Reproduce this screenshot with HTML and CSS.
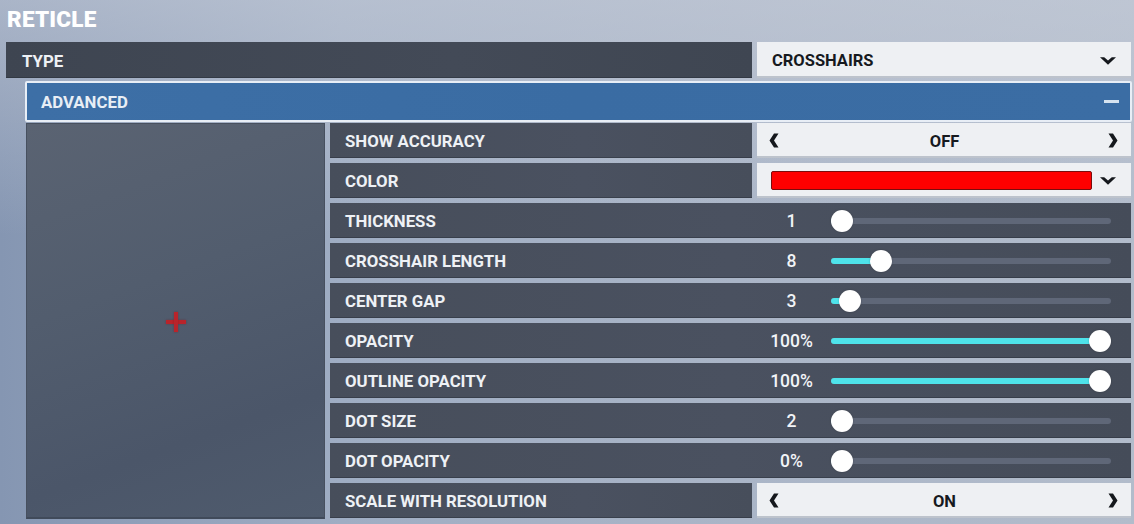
FILE: index.html
```html
<!DOCTYPE html>
<html lang="en">
<head>
<meta charset="utf-8">
<title>Reticle</title>
<link rel="stylesheet" href="styles.css">
</head>
<body>
<div class="page">
  <h1 class="title">RETICLE</h1>

  <div class="row type-row">
    <div class="label">TYPE</div>
    <div class="select dropdown">
      <span class="select-text">CROSSHAIRS</span>
      <svg class="chev" width="16" height="8" viewBox="0 0 16 8"><polygon points="0,0.3 4.2,0.3 8,3.4 11.8,0.3 16,0.3 8,7.7" fill="#15181d"/></svg>
    </div>
  </div>

  <section class="advanced">
    <header class="adv-head">
      <span>ADVANCED</span>
      <span class="minus"></span>
    </header>

    <div class="adv-body">
      <div class="preview">
        <div class="reticle">
          <span class="arm h"></span>
          <span class="arm v"></span>
        </div>
      </div>

      <div class="settings">
        <div class="row">
          <div class="label">SHOW ACCURACY</div>
          <div class="select toggle">
            <svg class="arrow" width="10" height="15" viewBox="0 0 10 15"><polygon points="9.5,0.5 5,7.5 9.5,14.5 5,14.5 0.5,7.5 5,0.5" fill="#15181d"/></svg>
            <span class="select-text center">OFF</span>
            <svg class="arrow" width="10" height="15" viewBox="0 0 10 15"><polygon points="0.5,0.5 5,7.5 0.5,14.5 5,14.5 9.5,7.5 5,0.5" fill="#15181d"/></svg>
          </div>
        </div>

        <div class="row">
          <div class="label">COLOR</div>
          <div class="select dropdown">
            <span class="swatch"></span>
            <svg class="chev" width="16" height="8" viewBox="0 0 16 8"><polygon points="0,0.3 4.2,0.3 8,3.4 11.8,0.3 16,0.3 8,7.7" fill="#15181d"/></svg>
          </div>
        </div>

        <div class="row slider-row">
          <div class="label">THICKNESS</div>
          <div class="value">1</div>
          <div class="track"><div class="fill" style="--p:0"></div><div class="knob" style="--p:0"></div></div>
        </div>

        <div class="row slider-row">
          <div class="label">CROSSHAIR LENGTH</div>
          <div class="value">8</div>
          <div class="track"><div class="fill" style="--p:0.15"></div><div class="knob" style="--p:0.15"></div></div>
        </div>

        <div class="row slider-row">
          <div class="label">CENTER GAP</div>
          <div class="value">3</div>
          <div class="track"><div class="fill" style="--p:0.03"></div><div class="knob" style="--p:0.03"></div></div>
        </div>

        <div class="row slider-row">
          <div class="label">OPACITY</div>
          <div class="value">100%</div>
          <div class="track"><div class="fill" style="--p:1"></div><div class="knob" style="--p:1"></div></div>
        </div>

        <div class="row slider-row">
          <div class="label">OUTLINE OPACITY</div>
          <div class="value">100%</div>
          <div class="track"><div class="fill" style="--p:1"></div><div class="knob" style="--p:1"></div></div>
        </div>

        <div class="row slider-row">
          <div class="label">DOT SIZE</div>
          <div class="value">2</div>
          <div class="track"><div class="fill" style="--p:0"></div><div class="knob" style="--p:0"></div></div>
        </div>

        <div class="row slider-row">
          <div class="label">DOT OPACITY</div>
          <div class="value">0%</div>
          <div class="track"><div class="fill" style="--p:0"></div><div class="knob" style="--p:0"></div></div>
        </div>

        <div class="row">
          <div class="label">SCALE WITH RESOLUTION</div>
          <div class="select toggle">
            <svg class="arrow" width="10" height="15" viewBox="0 0 10 15"><polygon points="9.5,0.5 5,7.5 9.5,14.5 5,14.5 0.5,7.5 5,0.5" fill="#15181d"/></svg>
            <span class="select-text center">ON</span>
            <svg class="arrow" width="10" height="15" viewBox="0 0 10 15"><polygon points="0.5,0.5 5,7.5 0.5,14.5 5,14.5 9.5,7.5 5,0.5" fill="#15181d"/></svg>
          </div>
        </div>
      </div>
    </div>
  </section>
</div>
</body>
</html>
```

FILE: styles.css
```css
* { box-sizing: border-box; }

html, body {
  margin: 0;
  height: 100%;
}

body {
  width: 1134px;
  height: 524px;
  overflow: hidden;
  font-family: Roboto, "Liberation Sans", sans-serif;
  font-weight: 700;
  color: #eef1f5;
  background:
    linear-gradient(180deg, rgba(200, 206, 218, 0.55) 0%, rgba(200, 206, 218, 0) 45%),
    linear-gradient(90deg, #8596b2 0%, #9fadc3 30%, #aab5c7 65%, #b2bccb 100%);
}

.page {
  padding: 0 2px 0 6px;
}

.title {
  margin: 0;
  height: 42px;
  padding: 7px 0 0 1px;
  font-size: 22.5px;
  line-height: 24px;
  font-weight: 900;
  color: #ffffff;
  letter-spacing: 0.2px;
}

/* generic row: dark label + light control */
.row {
  display: flex;
  gap: 5px;
  height: 35px;
}

.label {
  flex: 0 0 auto;
  display: flex;
  align-items: center;
  padding: 1px 0 0 15px;
  background: linear-gradient(90deg, #474e5b, #4a5160 60%, #474e5b);
  box-shadow: inset 0 -1px 0 rgba(30, 34, 42, 0.35);
  font-size: 16.8px;
  color: #eef1f5;
  white-space: nowrap;
}

.type-row {
  height: 36px;
}
.type-row .label {
  width: 746px;
  padding-left: 16px;
  background: linear-gradient(90deg, #3e4551, #434a57 60%, #3f4652);
}

.select {
  flex: 0 0 374px;
  display: flex;
  align-items: center;
  background: #eef0f3;
  box-shadow: inset 0 -2px 0 rgba(150, 158, 172, 0.55);
  color: #16191e;
  font-size: 16.5px;
  padding-top: 1px;
}

.dropdown {
  padding-left: 15px;
  padding-right: 15px;
  justify-content: space-between;
}

.toggle {
  padding-left: 12px;
  padding-right: 13px;
  justify-content: space-between;
}

.select-text.center {
  flex: 1;
  text-align: center;
  padding-left: 2px;
}

.chev { display: block; }
.arrow { display: block; margin-top: -1px; }

.swatch {
  width: 321px;
  height: 19px;
  margin-left: -1px;
  margin-top: -1px;
  background: #ff0000;
  border: 1px solid #7a0d0d;
  border-radius: 2px;
}

/* advanced panel */
.advanced {
  margin: 3px 0 0 19px;
}

.adv-head {
  height: 41px;
  display: flex;
  align-items: center;
  justify-content: space-between;
  padding: 1px 11px 0 14px;
  background: linear-gradient(90deg, #3d6fa6, #3a6ca3 50%, #3b6da4);
  border: 2px solid #e8eef6;
  border-radius: 2px;
  font-size: 16.8px;
  color: #e8eef5;
}

.minus {
  width: 15px;
  height: 3px;
  margin-top: -1px;
  background: #d6e3f0;
}

.adv-body {
  display: flex;
  gap: 5px;
  margin-top: 1px;
  padding-left: 1px;
}

.preview {
  flex: 0 0 299px;
  height: 396px;
  display: flex;
  align-items: center;
  justify-content: center;
  background: linear-gradient(160deg, #5a6372 0%, #525d6e 40%, #4b5669 75%, #4f5b6d 100%);
  border: 1px solid #47505f;
  border-bottom: 2px solid #404a5a;
}

.reticle {
  position: relative;
  width: 20px;
  height: 20px;
  margin: 2px 0 0 1px;
  filter: blur(0.7px);
}

.arm {
  position: absolute;
  background: #b8242b;
  box-shadow: 0 0 2px rgba(120, 20, 30, 0.6);
}
.arm.h { left: 0; top: 8px; width: 20px; height: 4px; }
.arm.v { left: 8px; top: 0; width: 4px; height: 20px; }

.settings {
  flex: 0 0 801px;
  display: flex;
  flex-direction: column;
  gap: 5px;
}

.settings .row > .label {
  width: 422px;
}

/* slider rows span the full width in a single bar */
.slider-row {
  gap: 0;
  background: linear-gradient(90deg, #474e5b, #4a5160 50%, #454c59);
  box-shadow: inset 0 -1px 0 rgba(30, 34, 42, 0.35);
}
.slider-row .label {
  background: none;
  box-shadow: none;
}

.value {
  width: 79px;
  display: flex;
  align-items: center;
  justify-content: center;
  padding-top: 1px;
  font-size: 17.5px;
  font-weight: 500;
  color: #f2f4f7;
}

.track {
  position: relative;
  width: 280px;
  height: 6px;
  margin-top: 15px;
  border-radius: 3px;
  background: #5f6778;
}

.fill {
  position: absolute;
  left: 0;
  top: 0;
  height: 6px;
  border-radius: 3px;
  background: #4ee3ea;
  width: calc(11px + var(--p) * 258px);
}

.knob {
  position: absolute;
  top: -8px;
  left: calc(var(--p) * 258px);
  width: 22px;
  height: 22px;
  border-radius: 50%;
  background: #ffffff;
  box-shadow: 0 0 2px rgba(0, 0, 0, 0.25);
}
```
